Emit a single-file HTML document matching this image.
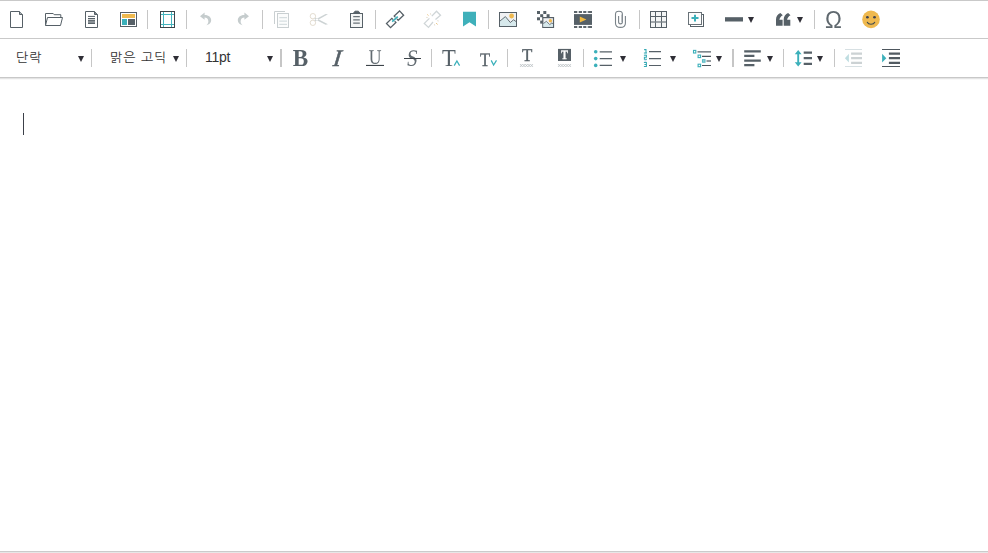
<!DOCTYPE html>
<html lang="ko">
<head>
<meta charset="utf-8">
<title>Editor</title>
<style>
html,body{margin:0;padding:0;background:#fff;}
body{width:988px;height:553px;overflow:hidden;position:relative;font-family:"Liberation Sans","NanumGothic","Noto Sans CJK KR",sans-serif;}
#ed{position:absolute;left:0;top:0;width:988px;height:553px;background:#fff;overflow:hidden;}
.hl{position:absolute;left:0;width:988px;height:1px;background:#c9c9c9;}
.sep{position:absolute;width:1px;height:19px;background:#c6c6c6;}
.r1{top:10px;}
.r2{top:49px;height:18px;}
.txt{position:absolute;font-size:13px;line-height:16px;color:#333;white-space:nowrap;}
.dd{position:absolute;width:0;height:0;border-left:3.2px solid transparent;border-right:3.2px solid transparent;border-top:6px solid #2f2e36;}
.ko{letter-spacing:1px;}
#icons{position:absolute;left:0;top:0;will-change:transform;}
#caret{position:absolute;left:23px;top:113px;width:1px;height:22px;background:#3c4049;}
</style>
</head>
<body>
<div id="ed">
<div class="hl" style="top:0"></div>
<div class="hl" style="top:38px"></div>
<div class="hl" style="top:77px;background:#c8c8c8"></div>
<div class="hl" style="top:78px;background:#e4e4e4"></div>
<div class="hl" style="top:79px;background:#f8f8f8"></div>
<div class="hl" style="top:551px;background:#cbcbcb"></div>
<div class="hl" style="top:552px;background:#e7e7e7"></div>

<!-- row 1 separators -->
<div class="sep r1" style="left:147px"></div>
<div class="sep r1" style="left:186px"></div>
<div class="sep r1" style="left:262px"></div>
<div class="sep r1" style="left:375px"></div>
<div class="sep r1" style="left:488px"></div>
<div class="sep r1" style="left:639px"></div>
<div class="sep r1" style="left:814px"></div>
<!-- row 2 separators -->
<div class="sep r2" style="left:91px"></div>
<div class="sep r2" style="left:186px"></div>
<div class="sep r2" style="left:280px;width:2px"></div>
<div class="sep r2" style="left:431px"></div>
<div class="sep r2" style="left:507px"></div>
<div class="sep r2" style="left:583px"></div>
<div class="sep r2" style="left:732px;width:2px"></div>
<div class="sep r2" style="left:783px"></div>
<div class="sep r2" style="left:834px"></div>

<div class="txt ko" style="left:16px;top:50px;">단락</div>
<div class="txt ko" style="left:110px;top:50px;">맑은 고딕</div>
<div class="txt" style="left:205px;top:49px;font-size:14px;letter-spacing:-0.3px;">11pt</div>

<div class="dd" style="left:77.8px;top:56px"></div>
<div class="dd" style="left:173px;top:56px"></div>
<div class="dd" style="left:266.8px;top:56px"></div>
<div class="dd" style="left:620px;top:56px"></div>
<div class="dd" style="left:669.8px;top:56px"></div>
<div class="dd" style="left:716px;top:56px"></div>
<div class="dd" style="left:767px;top:56px"></div>
<div class="dd" style="left:817px;top:56px"></div>
<div class="dd" style="left:748px;top:17px"></div>
<div class="dd" style="left:797px;top:17px"></div>

<svg id="icons" width="988" height="78" viewBox="0 0 988 78">
<!--ICONS-->
<g fill="none" stroke="#566067" stroke-width="1">
<!-- new doc -->
<path d="M10.5 11.5H19.5L22.5 14.5V27.5H10.5Z" fill="#fff"/>
<path d="M19.5 11.5V14.5H22.5" fill="#aab2b6"/>
<!-- open -->
<path d="M45.5 25.5V13.5H53.2L54.2 14.7H60.8V17.5"/>
<path d="M45.5 25.5L47.5 17.5H62.5L60.5 25.5Z" fill="#fff"/>
<!-- doc preview -->
<path d="M85.5 11.5H94.5L97.5 14.5V27.5H85.5Z" fill="#fff"/>
<path d="M94.5 11.5V14.5H97.5" fill="#7d868b"/>
<path d="M88 16.4H95M88 18.500H95" stroke-width="1"/><rect x="88" y="19.800" width="7" height="4.200" fill="#8a9196" stroke="none"/><path d="M88 20.300H95M88 23.500H95" stroke-width="0.900"/>
<!-- template -->
<rect x="120.5" y="12.5" width="16" height="14" fill="#fff"/>
<!-- fullscreen -->
<rect x="160.5" y="11.5" width="14" height="16" fill="#fff" stroke="#3d444a"/>
</g>
<rect x="122" y="14" width="13" height="4" fill="#efb94f"/>
<rect x="122" y="19" width="5" height="6" fill="#3bb0ba"/>
<rect x="128" y="19" width="7" height="6" fill="#566067"/>
<g stroke="#45b4be" stroke-width="1" fill="none">
<path d="M163.5 12V27M171.5 12V27M161 14.5H174M161 24.5H174"/>
</g>
<!-- undo / redo -->
<path d="M200 16.2L204.6 12.6V15C209 15 211.2 17.6 211.2 20.2C211.2 22.6 209.2 24.6 206.4 25.3C208 24 208.6 22.4 208.3 20.8C207.9 18.6 206.6 17.6 204.6 17.6V19.8Z" fill="#c5cccd"/>
<path d="M249 16.2L244.4 12.6V15C240 15 237.8 17.6 237.8 20.2C237.8 22.6 239.8 24.6 242.6 25.3C241 24 240.4 22.4 240.7 20.8C241.1 18.6 242.4 17.6 244.4 17.6V19.8Z" fill="#c5cccd"/>
<!-- copy -->
<g fill="none" stroke="#c9cfd1" stroke-width="1">
<path d="M274.5 24V11.5H285"/>
<rect x="277.5" y="13.5" width="11" height="14" fill="#fbfcfc"/>
<path d="M279.300 17.600H287M279.300 21.100H287M279.300 24.400H287" stroke="#d6dddf" stroke-width="1.300"/>
</g>
<!-- cut -->
<g fill="none" stroke-width="1">
<circle cx="312.900" cy="16.200" r="2.700" stroke="#e0d8cb" stroke-width="0.900"/>
<circle cx="312.900" cy="22.800" r="2.700" stroke="#e0d8cb" stroke-width="0.900"/>
<path d="M315 17.600L328 24.300L325.600 24.800L314.800 19.300ZM315 21.400L328 14.300L325.600 14L314.800 19.700Z" fill="#cdd3d4" stroke="none"/>
</g>
<!-- paste -->
<g fill="none" stroke="#566067">
<rect x="350.5" y="13.5" width="12" height="14" fill="#f4f6f6"/>
<path d="M353.200 13.500L355 11.200H358.400L360.200 13.500Z" fill="#566067"/>
<path d="M353.200 16.600H359.800M353.200 19.900H359.800M353.200 23.100H359.800" stroke="#6a7379" stroke-width="1.300"/>
</g>
<!-- link -->
<g fill="none" stroke="#566067" stroke-width="1.300">
<path d="M3.700 -1.100V-2.950H-3.700V2.950H3.700V1.100" transform="translate(391.200 23) rotate(-43.500)"/>
<path d="M-3.700 -1.100V-2.950H3.700V2.950H-3.700V1.100" transform="translate(398.900 15.600) rotate(-43.500)"/>
<path d="M392.200 21.700L397.800 16.600" stroke="#3bb0ba" stroke-width="1.600"/>
</g>
<!-- unlink -->
<g fill="none" stroke="#cfd5d7" stroke-width="1.300">
<path d="M429.400 18.400L424.300 23.400L428.500 27.400L433 22"/>
<path d="M431.800 16.100L436.500 11.200L440.500 15.200L435.500 19.600"/>
<path d="M427.200 14.400L428.600 15.700M436 23.100L437.700 24.500" stroke="#ecc98f" stroke-width="1"/>
<path d="M430.400 13.200L430.800 14.800M426.200 17.400L427.800 17.600M434.400 24.100L434.700 25.600M437.200 20.700L438.800 21" stroke="#e3dccf" stroke-width="0.900"/>
</g>
<!-- bookmark -->
<path d="M463 11.8H476V26.6L469.5 22.2L463 26.6Z" fill="#3fb0ba"/>
<!-- image -->
<g>
<rect x="499.5" y="12.5" width="17" height="14" fill="#f0f1f3" stroke="#566067"/>
<path d="M500 21L505.400 16.600L510.300 22.500L513.600 19.800L516 21.500V26H500Z" fill="#d7e9ec"/>
<path d="M500 21L505.400 16.600L510.300 22.500L513.600 19.800L516 21.500" fill="none" stroke="#566067" stroke-width="0.900"/>
<circle cx="511.600" cy="16" r="2.400" fill="#efb94f"/>
</g>
<!-- image bg -->
<g>
<g fill="#566067">
<rect x="537" y="11" width="3" height="3"/><rect x="543.300" y="11" width="3" height="3"/>
<rect x="540.200" y="14.200" width="3" height="3"/><rect x="546.600" y="14.200" width="3" height="3"/>
<rect x="537" y="17.300" width="3" height="3"/>
<rect x="540.200" y="20.600" width="3" height="3"/>
</g>
<rect x="542.800" y="17.600" width="10.700" height="9.800" fill="#f0f1f3" stroke="#566067" stroke-width="1.200"/>
<path d="M543.400 23.600L546.400 21.300L549.700 24.600L552 22.800L553 24V26.800H543.400Z" fill="#d7e9ec"/>
<path d="M543.400 23.600L546.400 21.300L549.700 24.600L552 22.800L553 24" fill="none" stroke="#566067" stroke-width="0.800"/>
<circle cx="550.400" cy="20.700" r="1.700" fill="#efb94f"/>
</g>
<!-- video -->
<g>
<rect x="574" y="14.100" width="18" height="10.800" fill="#566067"/>
<path d="M577 12H579M586 12H588M577 27H579M586 27H588" stroke="#c3c9cb" stroke-width="1.500"/>
<g fill="#4d565d">
<rect x="574" y="11.100" width="3" height="1.800"/><rect x="579" y="11.100" width="3" height="1.800"/><rect x="583.200" y="11.100" width="2.900" height="1.800"/><rect x="588.100" y="11.100" width="3.900" height="1.800"/>
<rect x="574" y="26.100" width="3" height="1.800"/><rect x="579" y="26.100" width="3" height="1.800"/><rect x="583.200" y="26.100" width="2.900" height="1.800"/><rect x="588.100" y="26.100" width="3.900" height="1.800"/>
</g>
<path d="M579.800 16.500L586.400 19.500L579.800 22.500Z" fill="#f2b83c"/>
</g>
<!-- attach -->
<path d="M625.400 16.100V23.200C625.400 28.800 615.500 28.800 615.500 23.200V14.200C615.500 10.300 622.400 10.300 622.400 14.200V21.800C622.400 24.600 618.600 24.600 618.600 21.800V16.100" fill="none" stroke="#7a8389" stroke-width="1.100"/>
<path d="M621.600 14.500V22" fill="none" stroke="#aab1b5" stroke-width="0.800"/>
<!-- table -->
<g>
<rect x="650.5" y="11.500" width="16" height="16" fill="#f3f5f5" stroke="#566067"/>
<path d="M655.500 12V27M661.500 12V27M651 16.500H666" stroke="#566067" stroke-width="1" fill="none"/><path d="M651 22H666" stroke="#7d868b" stroke-width="1.400" fill="none"/>
</g>
<!-- layer -->
<g fill="#fff" stroke="#566067">
<rect x="690.500" y="14.500" width="13" height="12"/>
<rect x="688.500" y="12.500" width="13" height="12" fill="#fdfdfd" stroke="#697278"/>
<path d="M695 14.800V21.400M691.500 18.100H698.500" stroke="#3bb0ba" stroke-width="2"/>
</g>
<!-- hr -->
<rect x="725" y="17.200" width="18" height="4.300" fill="#566067"/>
<!-- quote -->
<path d="M776 25.800V19.500C776 16.500 777.800 14 780.400 13L782.800 15.200C781 16.200 779.600 17.800 779.400 19.800H782.600V25.800Z" fill="#566067"/>
<path d="M776 25.800V19.500C776 16.500 777.800 14 780.400 13L782.800 15.200C781 16.200 779.600 17.800 779.400 19.800H782.600V25.800Z" fill="#566067" transform="translate(7.700 0)"/>
<!-- omega -->
<text transform="translate(833.400 27.800) scale(0.970 1)" x="0" y="0" text-anchor="middle" font-family="Liberation Sans, sans-serif" font-size="23.300" fill="#5f686e">Ω</text>
<!-- emoji -->
<g>
<circle cx="871" cy="19.400" r="8.800" fill="#efb94f"/>
<ellipse cx="867.400" cy="17.300" rx="1.400" ry="1.300" fill="#3f4350"/>
<ellipse cx="874.500" cy="17.300" rx="1.400" ry="1.300" fill="#3f4350"/>
<path d="M867.300 22.300C868.300 24.900 873.700 24.900 874.700 22.300" fill="none" stroke="#3f4a4f" stroke-width="1.100" stroke-linecap="round"/>
</g>

<!-- ROW 2 -->
<g font-family="Liberation Serif, serif" fill="#566067">
<text transform="translate(300.600 65.900) rotate(0.050) scale(0.950 1)" text-anchor="middle" font-size="24.400" font-weight="bold">B</text>
<text transform="translate(336.500 65.900) rotate(0.050) skewX(-7)" text-anchor="middle" font-size="23.800" font-style="italic" stroke="#566067" stroke-width="0.600">I</text>
<text transform="translate(375 63.700) rotate(0.050) scale(0.860 1)" text-anchor="middle" font-size="20.500" fill="#626b71">U</text>
<text transform="translate(411.600 65.800) rotate(0.050) skewX(-7) scale(0.860 1)" text-anchor="middle" font-size="23.400" fill="#626b71">S</text>
<text transform="translate(448.800 65.900) rotate(0.050) scale(0.930 1)" text-anchor="middle" font-size="24.300">T</text>
<text transform="translate(485.100 65.900) rotate(0.050) scale(0.860 1)" text-anchor="middle" font-size="19.200" stroke="#566067" stroke-width="0.300">T</text>
<text transform="translate(527.100 60.900) rotate(0.050) scale(0.940 1)" text-anchor="middle" font-size="18" stroke="#566067" stroke-width="0.350">T</text>
</g>
<rect x="366" y="64.900" width="18" height="1.100" fill="#3d444a"/>
<rect x="404" y="58" width="17" height="1" fill="#3d444a"/>
<path d="M454.200 65.600L456.900 60.900L459.600 65.600" fill="none" stroke="#3bb0ba" stroke-width="1.250"/>
<path d="M491.200 60.400L493.600 65L496.500 60.400" fill="none" stroke="#3bb0ba" stroke-width="1.250"/>
<!-- text color hatch -->
<g stroke="#b4bbbf" stroke-width="0.700" fill="none"><path d="M520.0 64L522.6 67M522.6 64L520.0 67M522.6 64L525.2 67M525.2 64L522.6 67M525.2 64L527.8 67M527.8 64L525.2 67M527.8 64L530.4 67M530.4 64L527.8 67M530.4 64L533.0 67M533.0 64L530.4 67"/><path d="M558.0 64L560.6 67M560.6 64L558.0 67M560.6 64L563.2 67M563.2 64L560.6 67M563.2 64L565.8 67M565.8 64L563.2 67M565.8 64L568.4 67M568.4 64L565.8 67M568.4 64L571.0 67M571.0 64L568.4 67"/></g>
<rect x="558" y="48.900" width="13" height="12.100" fill="#566067"/>
<text transform="translate(564.500 59) rotate(0.050) scale(0.840 1)" text-anchor="middle" font-family="Liberation Serif, serif" font-weight="bold" font-size="12.600" fill="#fff" stroke="#fff" stroke-width="0.300">T</text>
<!-- ul -->
<g>
<circle cx="595.700" cy="51.800" r="1.800" fill="#3bb0ba"/><circle cx="595.700" cy="58.600" r="1.800" fill="#3bb0ba"/><circle cx="595.700" cy="65.400" r="1.800" fill="#3bb0ba"/>
<path d="M599.700 51.800H612M599.700 58.600H612M599.700 65.400H612" stroke="#566067" stroke-width="1.200"/>
</g>
<!-- ol -->
<g>
<path d="M649 51.700H661M649 58.600H661M649 65.500H661" stroke="#566067" stroke-width="1.200"/>
<rect x="644.400" y="53.500" width="2" height="1.300" fill="#d5ecef"/><rect x="644.400" y="60" width="2" height="2" fill="#cfe0f0"/>
<g fill="none" stroke="#35aab4" stroke-width="1.050" stroke-linejoin="miter">
<path d="M644.100 49.600H646V52.600M643.900 53H647"/>
<path d="M643.900 55.300H646.400V57.300H644.400V59.300H647"/>
<path d="M643.900 62.400H646.400V66.500H643.900M644.400 64.400H646.400"/>
</g>
</g>
<!-- multilevel -->
<g>
<path d="M697.500 51.850H711" stroke="#727b81" stroke-width="1.500"/>
<path d="M702 56.400H711M702 65.500H711" stroke="#4d565d" stroke-width="1.200"/>
<path d="M706.500 61H711" stroke="#8a9196" stroke-width="1.800"/>
<g fill="#fff" stroke="#3bb0ba" stroke-width="1.100">
<rect x="693.500" y="50.400" width="2.300" height="2.600"/>
<rect x="698.100" y="55.100" width="2.500" height="2.500"/>
<rect x="702.500" y="59.700" width="2.500" height="2.500" fill="#9fd6db" stroke="#58bcc5"/>
<rect x="698.100" y="64.200" width="2.500" height="2.500"/>
</g>
</g>
<!-- align -->
<path d="M744.200 51.300H760.800M744.200 55.900H754.400M744.200 60.600H760.800M744.200 65.100H754.400" stroke="#566067" stroke-width="2.200"/>
<!-- line height -->
<g>
<path d="M798.200 52.500V64" stroke="#3bb0ba" stroke-width="1.900"/>
<path d="M794.800 54.200L798.200 50L801.600 54.200ZM794.800 62.200L798.200 66.400L801.600 62.200Z" fill="#3bb0ba"/>
<path d="M803.700 52.600H812M803.700 58.200H812M803.700 63.800H812" stroke="#566067" stroke-width="2.200"/>
</g>
<!-- outdent -->
<g>
<path d="M845 49.500H862M845 66.500H862" stroke="#d3dde0" stroke-width="0.900"/>
<path d="M851.100 53.600H862M851.100 58.200H862M851.100 62.800H862" stroke="#ccd2d4" stroke-width="2.300"/>
<path d="M848.900 53.800L844.900 58.200L848.900 62.400Z" fill="#bfdde1"/>
</g>
<!-- indent -->
<g>
<path d="M882 49.500H900M882 66.500H900" stroke="#4d565d" stroke-width="1"/>
<path d="M888.900 53.600H900M888.900 58.200H900M888.900 62.800H900" stroke="#525b62" stroke-width="2.300"/>
<path d="M882.100 53.800L886.300 58.200L882.100 62.400Z" fill="#3bb0ba"/>
</g>
<!--/ICONS-->
</svg>

<div id="caret"></div>
</div>
</body>
</html>
